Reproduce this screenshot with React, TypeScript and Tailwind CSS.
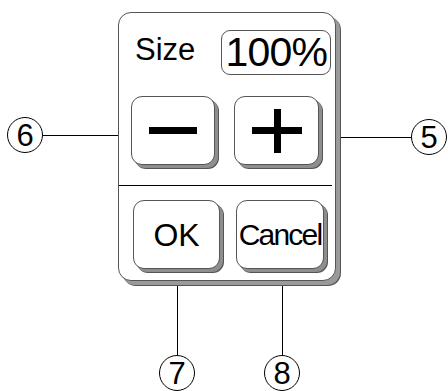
const font = { fontFamily: '"Liberation Sans", Arial, sans-serif' };

const Callout = ({ n, className }: { n: string; className: string }) => (
  <div
    className={`absolute w-[36px] h-[36px] rounded-full border border-black bg-white flex items-center justify-center text-[31px] leading-none text-black ${className}`}
  >
    <span className="mt-[1px]">{n}</span>
  </div>
);

const Key = ({ className, children }: { className: string; children: React.ReactNode }) => (
  <div
    className={`h-[69px] rounded-[11px] border border-[#555] bg-white shadow-[3px_3px_0_#8e8e8e,4px_4px_0_#555] flex items-center justify-center text-black ${className}`}
  >
    {children}
  </div>
);

export default function App() {
  return (
    <div className="relative w-[448px] h-[391px] bg-white overflow-hidden" style={font}>
      <div className="absolute left-[43px] top-[135px] w-[88px] h-px bg-black" />
      <div className="absolute left-[322px] top-[137px] w-[90px] h-px bg-black" />
      <div className="absolute left-[177px] top-[270px] w-px h-[86px] bg-black" />
      <div className="absolute left-[282px] top-[270px] w-px h-[86px] bg-black" />

      <div className="pt-[12px] pl-[118px]">
        <div className="relative w-[218px] h-[269px] rounded-[13px] border border-[#555] bg-white shadow-[4px_4px_0_#9a9a9a,5px_5px_0_#555] flex flex-col">
          <div className="flex items-center pt-[17px]">
            <span className="ml-[16px] text-[31px] leading-none text-black -mt-[6px]">Size</span>
            <div className="ml-[26px] w-[110px] h-[45px] rounded-[9px] border border-[#555] flex items-center justify-center">
              <span className="text-[41px] leading-none tracking-[-0.8px] text-black">100%</span>
            </div>
          </div>

          <div className="flex mt-[21px]">
            <Key className="ml-[12px] w-[84px]">
              <div className="w-[48px] h-[7px] bg-black" />
            </Key>
            <Key className="ml-[19px] w-[85px]">
              <svg width="50" height="44" viewBox="0 0 50 44">
                <rect x="0" y="18" width="50" height="7" fill="#000" />
                <rect x="22" y="0" width="7" height="44" fill="#000" />
              </svg>
            </Key>
          </div>

          <div className="mt-[20px] h-px bg-black mr-[3px]" />

          <div className="flex mt-[14px]">
            <Key className="ml-[14px] w-[87px]">
              <span className="text-[32px] leading-none">OK</span>
            </Key>
            <Key className="ml-[16px] w-[88px]">
              <span className="text-[30px] leading-none tracking-[-1.8px]">Cancel</span>
            </Key>
          </div>
        </div>
      </div>

      <Callout n="6" className="left-[7px] top-[117px]" />
      <Callout n="5" className="left-[411px] top-[119px]" />
      <Callout n="7" className="left-[159px] top-[355px]" />
      <Callout n="8" className="left-[264px] top-[355px]" />
    </div>
  );
}
